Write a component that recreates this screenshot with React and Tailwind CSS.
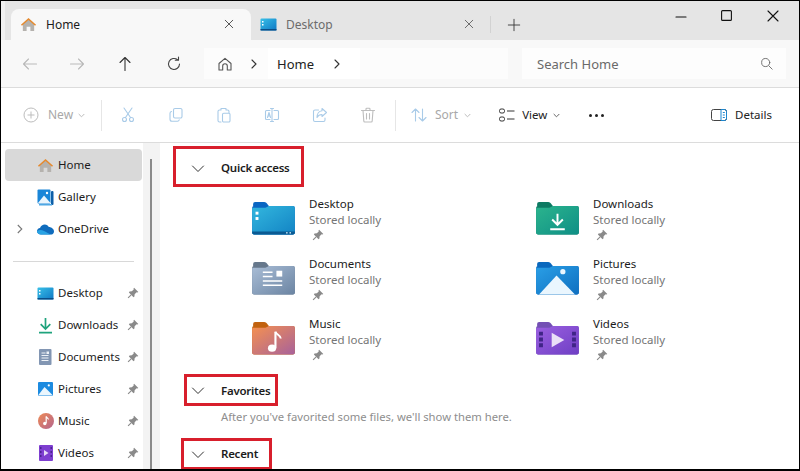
import React from 'react';

const FONT = 'font-["Noto_Sans","Open_Sans",sans-serif]';

const Line = ({ d, c = '#1f1f1f', w = 1.1, s = 16, vb = 16, fill = 'none', className = '' }) => (
  <svg width={s} height={s} viewBox={`0 0 ${vb} ${vb}`} fill={fill} stroke={c} strokeWidth={w} strokeLinecap="round" strokeLinejoin="round" className={className}>
    <path d={d} />
  </svg>
);

const HomeColor = ({ s = 17 }) => (
  <svg width={s} height={s} viewBox="0 0 18 18">
    <path d="M3 8.5 9 3.5l6 5V16h-4v-4.5H7V16H3z" fill="#b5b2ae" />
    <path d="M1 9.2 9 2l8 7.2-1.1 1.2L9 4.3 2.1 10.4z" fill="#e58a2f" />
  </svg>
);

const DesktopSmall = () => (
  <svg width="17" height="13" viewBox="0 0 17 13">
    <defs><linearGradient id="ds" x1="0" y1="0" x2="1" y2="1"><stop offset="0" stopColor="#38c0e8" /><stop offset="1" stopColor="#0f78c4" /></linearGradient></defs>
    <rect x="0.5" y="0.5" width="16" height="12" rx="1" fill="url(#ds)" />
    <rect x="0.5" y="11" width="16" height="1.5" fill="#0a4d86" />
    <rect x="2" y="3" width="1.5" height="1.5" fill="#fff" />
    <rect x="2" y="6" width="1.5" height="1.5" fill="#fff" />
  </svg>
);

const GallerySmall = () => (
  <svg width="17" height="17" viewBox="0 0 17 17">
    <rect x="0.5" y="0.5" width="13" height="14" rx="1" fill="#1a86d8" />
    <rect x="14" y="2" width="2.5" height="14" rx="1" fill="#0d5fa8" />
    <rect x="2" y="15" width="13" height="1.5" fill="#4fa8e4" />
    <path d="M1 14 7 6.5l6.5 7.5z" fill="#e9f5fd" />
    <circle cx="10" cy="4" r="1.2" fill="#fff" />
  </svg>
);

const Cloud = () => (
  <svg width="17" height="12" viewBox="0 0 17 12">
    <path d="M4 11.5C1.7 11.5 0 10 0 8.2 0 6.5 1.4 5.2 3 5.1 3.8 2.700 5.700 1.500 7.800 1.500c1.800 0 3.300.9 4 2.400C14.700 4 17 6 17 8.400c0 1.900-1.400 3.100-3.200 3.100z" fill="#0f6cbd" />
    <path d="M4 11.500C1.700 11.500 0 10 0 8.200c2-1.700 4.500-1.500 7-.3 2 1 4.500 2.300 7 3.600z" fill="#29a3e4" />
  </svg>
);

const DownloadSmall = () => (
  <svg width="15" height="17" viewBox="0 0 15 17" fill="none" stroke="#1fa37d" strokeWidth="1.7">
    <path d="M7.500 1v10.500M2.700 7.200l4.800 4.800 4.800-4.800M1 15.700h13" />
  </svg>
);

const DocSmall = () => (
  <svg width="13" height="16" viewBox="0 0 13 16">
    <rect width="12.500" height="16" rx="1" fill="#8296b3" />
    <path d="M2.500 4h4M2.500 6.500h7M2.500 9h7M2.500 11.500h7" stroke="#eef2f7" strokeWidth="1" />
    <rect x="7.500" y="2.500" width="2.500" height="2.500" fill="#eef2f7" />
  </svg>
);

const PicSmall = () => (
  <svg width="15" height="14" viewBox="0 0 15 14">
    <rect width="15" height="14" rx="1" fill="#1c8be0" />
    <path d="M0 13.500 6.500 5 15 13.500z" fill="#eaf6fe" />
    <circle cx="10.800" cy="3.400" r="1.100" fill="#fff" />
  </svg>
);

const MusicSmall = () => (
  <svg width="16" height="16" viewBox="0 0 16 16">
    <defs><linearGradient id="ms" x1="0" y1="0" x2="1" y2="1"><stop offset="0" stopColor="#ee8a55" /><stop offset="1" stopColor="#b4658e" /></linearGradient></defs>
    <circle cx="8" cy="8" r="8" fill="url(#ms)" />
    <path d="M8.200 3.500v6.500" stroke="#fff" strokeWidth="1.200" />
    <path d="M8.200 3.500c.4 1.500 2 1.500 2.300 3" stroke="#fff" strokeWidth="1.100" fill="none" />
    <circle cx="6.800" cy="10.500" r="1.700" fill="#fff" />
  </svg>
);

const VideoSmall = () => (
  <svg width="14" height="16" viewBox="0 0 14 16">
    <rect width="14" height="16" rx="1" fill="#7e3fd0" />
    <path d="M1 2h1.500v2H1zM1 6h1.500v2H1zM1 10h1.500v2H1zM11.500 2H13v2h-1.500zM11.500 6H13v2h-1.500zM11.500 10H13v2h-1.500z" fill="#4b2391" />
    <path d="M5 5v6l4.500-3z" fill="#e7dbf7" />
  </svg>
);

const Pin = ({ c = '#8a8a8a' }) => (
  <svg width="12" height="12" viewBox="0 0 11 11">
    <path d="M6.500.6 10.400 4.500 9.500 5.100 8.800 4.800 7 6.600 6.800 8.700 6 9.300 1.700 5 2.300 4.200 4.400 4 6.200 2.200 5.900 1.500z" fill={c} />
    <path d="M3.800 7.200 1 10" stroke={c} strokeWidth="1" />
  </svg>
);

const Chev = ({ c = '#8a8a8a' }) => (
  <svg width="7" height="5" viewBox="0 0 7 5" fill="none" stroke={c} strokeWidth="0.9"><path d="M.7 1 3.500 3.800 6.300 1" /></svg>
);

const FolderBase = ({ id, tab, from, to, bar, children }) => (
  <svg width="43" height="33" viewBox="0 0 44 34">
    <defs>
      <linearGradient id={id} x1="0" y1="0" x2="1" y2="1">
        <stop offset="0" stopColor={from} />
        <stop offset="1" stopColor={to} />
      </linearGradient>
    </defs>
    <path d="M1 5V2a2 2 0 0 1 2-2h9.500c1.500 0 2.500 1 3.500 2.500L17.500 5z" fill={tab} />
    <path d="M0 6a2 2 0 0 1 2-2h9l4-.8 2.500 1H42a2 2 0 0 1 2 2V31.500a2 2 0 0 1-2 2H2a2 2 0 0 1-2-2z" fill={tab} />
    <path d="M0 7a1 1 0 0 1 1-1h11.500c1.500 0 3-.6 4.500-1.800H42a2 2 0 0 1 2 2V31.500a2 2 0 0 1-2 2H2a2 2 0 0 1-2-2z" fill={`url(#${id})`} />
    {bar && <path d="M0 30.500h44v1a2 2 0 0 1-2 2H2a2 2 0 0 1-2-2z" fill={bar} />}
    {children}
  </svg>
);

const folders = {
  Desktop: (
    <FolderBase id="f1" tab="#0a66c2" from="#33b7de" to="#1283c4" bar="#0b5a92">
      <rect x="3.500" y="10" width="3" height="3" fill="#fff" />
      <rect x="3.500" y="15.500" width="3" height="3" fill="#fff" />
      <rect x="35" y="31" width="1.500" height="1.500" fill="#cfeaf7" />
      <rect x="38.500" y="31" width="1.500" height="1.500" fill="#cfeaf7" />
    </FolderBase>
  ),
  Downloads: (
    <FolderBase id="f2" tab="#0d7a63" from="#2bb48d" to="#0f8f86">
      <path d="M22 12v11M16.500 18l5.500 5.500 5.500-5.500M14.500 28h15" stroke="#fff" strokeWidth="2" fill="none" />
    </FolderBase>
  ),
  Documents: (
    <FolderBase id="f3" tab="#66788c" from="#a9bdd6" to="#6b84a2">
      <path d="M11 10.500h10M11 15h10M11 19.500h20M11 24h20" stroke="#fff" strokeWidth="1.600" />
      <rect x="25" y="9" width="6" height="6" fill="#fff" />
    </FolderBase>
  ),
  Pictures: (
    <FolderBase id="f4" tab="#0a68bd" from="#2a9fe6" to="#0f6fc0">
      <path d="M3 33.500 21 14l19 19.500z" fill="#eaf6fe" />
      <circle cx="27.500" cy="10" r="2.700" fill="#eaf6fe" />
    </FolderBase>
  ),
  Music: (
    <FolderBase id="f5" tab="#c1620f" from="#f59150" to="#a7619b">
      <path d="M24 10v17" stroke="#fff" strokeWidth="2.200" />
      <path d="M24 10c1 3.500 5 3 5.500 7" stroke="#fff" strokeWidth="2" fill="none" />
      <ellipse cx="20.500" cy="27" rx="4.200" ry="3.700" fill="#fff" />
    </FolderBase>
  ),
  Videos: (
    <FolderBase id="f6" tab="#7350b4" from="#9a5fe0" to="#6f3fc4">
      <path d="M3 10h4v4H3zM3 16h4v4H3zM3 22h4v4H3zM37 10h4v4h-4zM37 16h4v4h-4zM37 22h4v4h-4z" fill="#3f2486" />
      <path d="M16 11v15l13-7.500z" fill="#eadff7" />
    </FolderBase>
  ),
};

const side1 = [
  { n: 'Home', i: <HomeColor />, active: true },
  { n: 'Gallery', i: <GallerySmall /> },
  { n: 'OneDrive', i: <Cloud />, expand: true },
];
const side2 = [
  { n: 'Desktop', i: <DesktopSmall /> },
  { n: 'Downloads', i: <DownloadSmall /> },
  { n: 'Documents', i: <DocSmall /> },
  { n: 'Pictures', i: <PicSmall /> },
  { n: 'Music', i: <MusicSmall /> },
  { n: 'Videos', i: <VideoSmall /> },
];

const SideRow = ({ n, i, active, expand, pin }) => (
  <div className={`relative flex h-8 w-[137px] items-center rounded pl-[28px] ${active ? 'bg-[#d9d9d9]' : ''}`}>
    {expand && (
      <svg width="6" height="10" viewBox="0 0 6 10" fill="none" stroke="#777" strokeWidth="1.100" className="absolute left-[12px] top-[11px]">
        <path d="M.8 1 4.800 5 .8 9" />
      </svg>
    )}
    <span className="flex w-[25px] shrink-0 items-center justify-center">{i}</span>
    <span className="flex-1 text-[11.5px] leading-4 text-[#1c1c1c]">{n}</span>
    {pin && <span className="mr-[3px]"><Pin /></span>}
  </div>
);

const Item = ({ n }) => (
  <div className="flex h-[60px] items-start">
    <div className="mt-[7px] w-[57px] shrink-0">{folders[n]}</div>
    <div className="flex flex-col text-[11.5px] leading-[17px]">
      <span className="text-[#1c1c1c]">{n}</span>
      <span className="-mt-[1px] text-[#757575]">Stored locally</span>
      <span className="ml-[3px] mt-[1px]"><Pin /></span>
    </div>
  </div>
);

const SectionHead = ({ t, className }) => (
  <div className={`flex items-center border-[3px] border-[#d81f2c] ${className}`}>
    <Line d="M1.500 1 7 6.500 12.500 1" c="#333" w={1} s={14} vb={14} className="mt-[7px] h-[14px]" />
    <span className="text-[11.5px] font-semibold leading-4 tracking-[-0.25px] text-[#1c1c1c]">{t}</span>
  </div>
);

const C = '#a9cbe8';
const G = '#bdbdbd';

export default function App() {
  return (
    <div className={`${FONT} flex h-[471px] w-[800px] flex-col overflow-hidden border-x border-t border-b-2 border-black bg-white`}>
      {/* Tabs */}
      <div className="flex h-[39px] shrink-0 items-end bg-[#e5e5e5] pl-[10px] shadow-[inset_4px_0_0_#f1f1f1]">
        <div className="flex h-[31px] w-[240px] items-center rounded-t-lg bg-[#f8f8f8] pb-[1px] pl-[9px] pr-[16px]">
          <HomeColor />
          <span className="ml-[9px] mt-[2px] flex-1 text-[12px] text-[#1c1c1c]">Home</span>
          <Line d="M3 3l10 10M13 3 3 13" c="#222" w={1} s={12} />
        </div>
        <div className="flex h-[31px] w-[239px] items-center pb-[1px] pl-[9px] pr-[15px]">
          <DesktopSmall />
          <span className="ml-[9px] mt-[2px] flex-1 text-[12px] text-[#6c6c6c]">Desktop</span>
          <Line d="M3 3l10 10M13 3 3 13" c="#444" w={1} s={12} />
        </div>
        <div className="mb-[7px] h-[17px] w-px bg-[#d2d2d2]" />
        <div className="mb-[8px] ml-[16px]">
          <Line d="M8 1.500v13M1.500 8h13" c="#333" w={1} s={14} />
        </div>
        <div className="ml-auto flex h-[38px] items-start self-start pt-[9px]">
          <div className="w-[46px]"><Line d="M1 7h10" c="#111" w={1.100} s={12} vb={12} /></div>
          <div className="w-[46px]"><svg width="11" height="11" viewBox="0 0 11 11" fill="none" stroke="#111" strokeWidth="1.100"><rect x=".6" y=".6" width="9.800" height="9.800" rx="1" /></svg></div>
          <div className="w-[32px]"><Line d="M1 1l10 10M11 1 1 11" c="#111" w={1.100} s={12} vb={12} /></div>
        </div>
      </div>

      {/* Nav */}
      <div className="flex h-[48px] shrink-0 items-center border-b border-[#dcdcdc] bg-[#f8f8f8] pl-[4px]">
        <div className="flex w-[199px] items-center">
          <div className="flex w-[48px] justify-center pl-[1px]"><Line d="M14.500 8h-13M6.500 3 1.500 8l5 5" c="#b9b9b9" /></div>
          <div className="flex w-[48px] justify-center"><Line d="M1.500 8h13M9.500 3l5 5-5 5" c="#b9b9b9" /></div>
          <div className="flex w-[48px] justify-center"><Line d="M8 14.500v-13M3 6.500l5-5 5 5" c="#333" /></div>
          <div className="flex w-[49px] justify-center"><Line d="M13.500 8A5.500 5.500 0 1 1 11.500 3.700M12.500 1v3.200H9.300" c="#444" /></div>
        </div>
        <div className="flex h-[31px] w-[304px] items-center bg-[#fcfcfc]">
          <span className="ml-[13px]"><Line d="M2 7.500 8 2.300l6 5.200V14h-3.700V10a2.300 2.300 0 0 0-4.600 0v4H2z" c="#555" w={1.100} /></span>
          <span className="ml-[18px]"><Line d="M1 1l4 4-4 4" c="#333" s={10} vb={10} /></span>
          <span className="ml-[7px] flex h-[31px] w-[92px] items-center bg-white pl-[9px] pt-[2px] text-[13px] text-[#222]">Home</span>
          <span className="-ml-[26px]"><Line d="M1 1l4 4-4 4" c="#333" s={10} vb={10} /></span>
        </div>
        <div className="ml-[14px] flex h-[31px] w-[264px] items-center justify-between bg-[#fdfdfd] pl-[15px] pr-[13px]">
          <span className="pt-[2px] text-[13px] text-[#6a6a6a]">Search Home</span>
          <Line d="M11 11l4 4M12 6.800a5 5 0 1 1-10 0 5 5 0 0 1 10 0z" c="#666" s={13} />
        </div>
      </div>

      {/* Toolbar */}
      <div className="flex h-[55px] shrink-0 items-center border-b border-[#dcdcdc] bg-white">
        <div className="flex w-[100px] items-center pl-[22px]">
          <svg width="16" height="16" viewBox="0 0 16 16" fill="none" stroke={G} strokeWidth="1"><circle cx="8" cy="8" r="7" /><path d="M8 4.500v7M4.500 8h7" /></svg>
          <span className="ml-[9px] text-[12px] text-[#a8a8a8]">New</span>
          <span className="ml-[5px]"><Chev c="#b4b4b4" /></span>
        </div>
        <div className="h-[31px] w-px bg-[#e6e6e6]" />
        <div className="ml-[2px] flex">
          <div className="flex w-[48px] justify-center"><Line d="M4 1l6.500 9.500M12 1 5.500 10.500M6.500 12.500a2 2 0 1 1-4 0 2 2 0 0 1 4 0zM13.500 12.500a2 2 0 1 1-4 0 2 2 0 0 1 4 0z" c={C} /></div>
          <div className="flex w-[48px] justify-center"><Line d="M5.500 3a1.500 1.500 0 0 1 1.500-1.500h5.500a1.500 1.500 0 0 1 1.500 1.500v6.500a1.500 1.500 0 0 1-1.500 1.500H7a1.500 1.500 0 0 1-1.500-1.500zM3.500 4.500A1.800 1.800 0 0 0 2 6.300v6a2 2 0 0 0 2 2h5.500c.8 0 1.500-.6 1.700-1.400" c={C} /></div>
          <div className="flex w-[48px] justify-center"><Line d="M5 3H3.500A1.500 1.500 0 0 0 2 4.500v9A1.500 1.500 0 0 0 3.500 15H5M5 3V1.500h5V3M10 3h1.500A1.500 1.500 0 0 1 13 4.500v1M6.500 7.500A1.200 1.200 0 0 1 7.700 6.300h5.100a1.200 1.200 0 0 1 1.200 1.200v6.300a1.200 1.200 0 0 1-1.200 1.200H7.700a1.200 1.200 0 0 1-1.200-1.200z" c={C} /></div>
          <div className="flex w-[48px] justify-center"><Line d="M6 3.500H2.500A1 1 0 0 0 1.500 4.500v7a1 1 0 0 0 1 1H6M10 3.500h3.500a1 1 0 0 1 1 1v7a1 1 0 0 1-1 1H10M8 1.500v13M6.500 1.500h3M6.500 14.500h3M3.500 10.500 5 5.500l1.500 5M4 9h2" c={C} /></div>
          <div className="flex w-[48px] justify-center"><Line d="M6.500 3H3a1.500 1.500 0 0 0-1.500 1.500V13A1.500 1.500 0 0 0 3 14.500h8.500A1.500 1.500 0 0 0 13 13v-2M10 1.500 14.500 5.500 10 9.500V7.500C7.500 7.500 6 8.500 5 10.500 5 7 7 4 10 3.800z" c={C} /></div>
          <div className="flex w-[48px] justify-center"><Line d="M1.500 3.500h13M6 3.500V2a.8.8 0 0 1 .8-.8h2.400A.8.8 0 0 1 10 2v1.500M3 3.500l.8 10.500a1 1 0 0 0 1 1h6.400a1 1 0 0 0 1-1L13 3.500M6.500 6.500v5.500M9.500 6.500v5.500" c={G} /></div>
        </div>
        <div className="ml-[3px] h-[31px] w-px bg-[#e6e6e6]" />
        <div className="ml-[15px] flex items-center">
          <Line d="M4.500 14V2M1 5.500 4.500 2 8 5.500M11.500 2v12M8 10.500 11.500 14l3.500-3.500" c={C} />
          <span className="ml-[8px] text-[12px] text-[#a8a8a8]">Sort</span>
          <span className="ml-[6px]"><Chev c="#b4b4b4" /></span>
        </div>
        <div className="ml-[28px] flex items-center">
          <svg width="16" height="14" viewBox="0 0 16 14" fill="none" stroke="#333" strokeWidth="1"><rect x=".5" y="1" width="5" height="4" rx="1.600" /><rect x=".5" y="9" width="5" height="4" rx="1.600" /><path d="M8 3h7.500M8 11h7.500" /></svg>
          <span className="ml-[7px] text-[11.5px] text-[#222]">View</span>
          <span className="ml-[6px]"><Chev c="#555" /></span>
        </div>
        <div className="ml-[29px] flex gap-[3px]">
          <span className="h-[3px] w-[3px] rounded-full bg-[#222]" />
          <span className="h-[3px] w-[3px] rounded-full bg-[#222]" />
          <span className="h-[3px] w-[3px] rounded-full bg-[#222]" />
        </div>
        <div className="ml-auto flex items-center pr-[27px]">
          <svg width="16" height="12" viewBox="0 0 16 12" fill="none" strokeWidth="1"><rect x=".5" y=".5" width="15" height="11" rx="2" stroke="#444" /><path d="M10 .5h3.500a2 2 0 0 1 2 2v7a2 2 0 0 1-2 2H10z" stroke="#1a86d0" /><path d="M11.800 3.500h2M11.800 6h2M11.800 8.500h2" stroke="#1a86d0" /></svg>
          <span className="ml-[8px] text-[11.5px] text-[#222]">Details</span>
        </div>
      </div>

      {/* Body */}
      <div className="flex min-h-0 flex-1">
        <div className="flex w-[142px] shrink-0 flex-col pl-[4px] pt-[6px]">
          {side1.map((r) => <SideRow key={r.n} {...r} />)}
          <div className="mb-[15px] ml-[8px] mt-[16px] h-px w-[121px] bg-[#d8d8d8]" />
          {side2.map((r) => <SideRow key={r.n} {...r} pin />)}
        </div>
        <div className="flex w-[17px] shrink-0 justify-center bg-[#f3f3f3] pr-[1px] pt-[16px]">
          <div className="h-full w-[2px] bg-[#8a8a8a]" />
        </div>
        <div className="relative min-w-0 flex-1 pl-[13px] pt-[3px]">
          <SectionHead t="Quick access" className="h-[41px] w-[131px] gap-[16px] pl-[15px] pt-[3px]" />
          <div className="ml-[79px] mt-[8px] grid w-[480px] grid-cols-[284px_196px]">
            {['Desktop', 'Downloads', 'Documents', 'Pictures', 'Music', 'Videos'].map((n) => <Item key={n} n={n} />)}
          </div>
          <SectionHead t="Favorites" className="-mt-[1px] ml-[11px] h-[32px] w-[94px] gap-[16px] pl-[4px] pt-[1px]" />
          <p className="ml-[48px] mt-[3px] text-[11.25px] leading-4 text-[#8e8e8e]">After you've favorited some files, we'll show them here.</p>
          <SectionHead t="Recent" className="ml-[8px] mt-[13px] h-[32px] w-[91px] gap-[16px] pl-[7px]" />
        </div>
      </div>
    </div>
  );
}
